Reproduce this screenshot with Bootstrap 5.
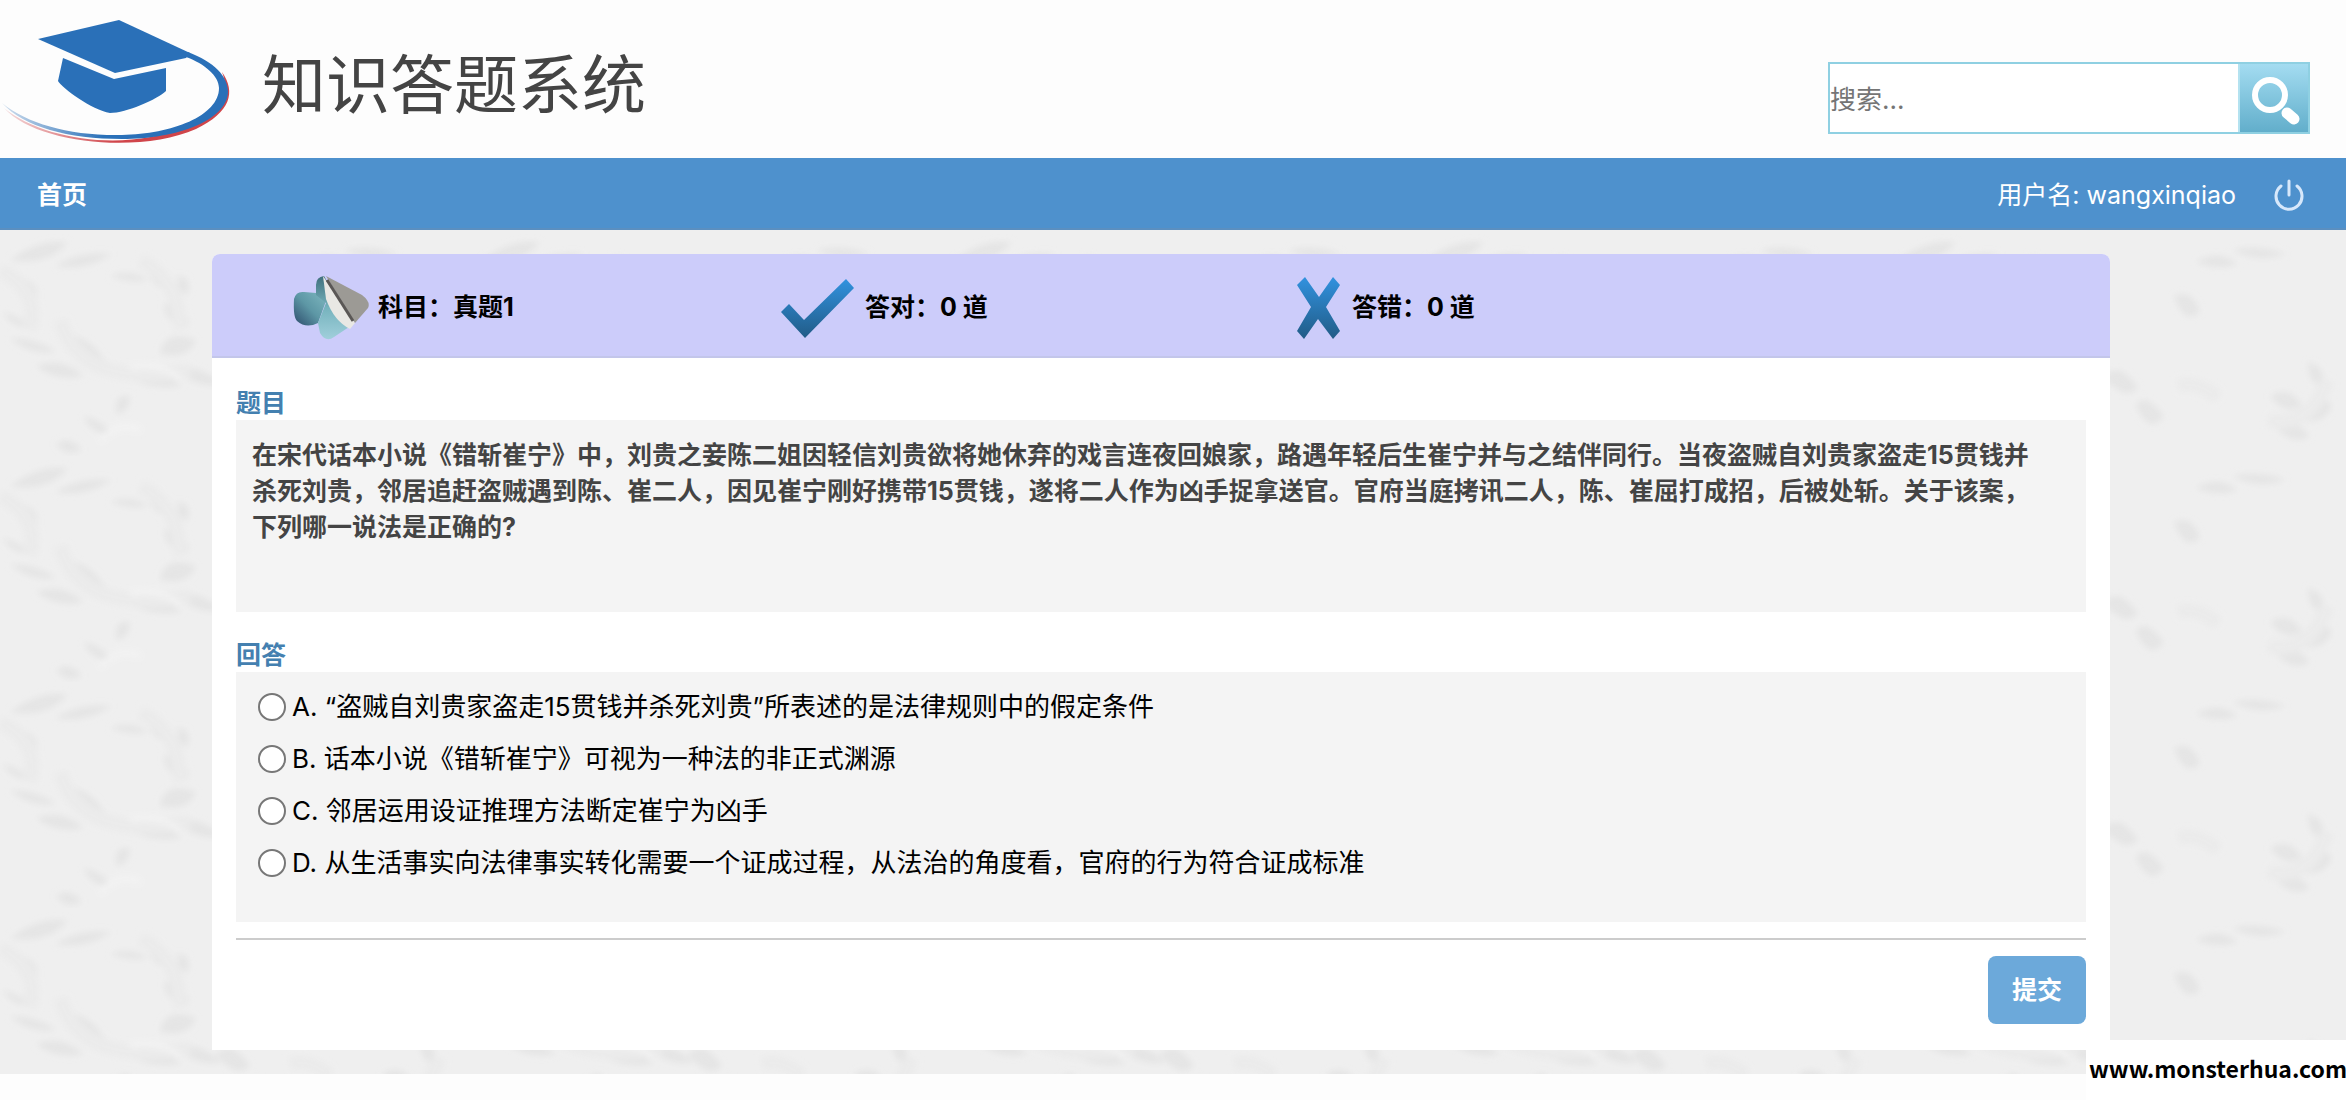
<!DOCTYPE html>
<html lang="zh-CN">
<head>
<meta charset="utf-8">
<meta name="viewport" content="width=device-width, initial-scale=1">
<title>知识答题系统</title>
<link rel="stylesheet" href="https://cdn.jsdelivr.net/npm/bootstrap@5.3.0/dist/css/bootstrap.min.css">
<style>
body{font-family:Inter,"Noto Sans CJK SC",sans-serif;font-size:26px;line-height:36px;color:#000;background:#fdfdfd}
.page{padding-bottom:26px}
.site-head{height:158px;padding-right:36px}
.site-logo{width:236px;height:158px}
.site-title{font-size:64px;line-height:80px;font-weight:400;color:#444;margin:0 0 0 26px;padding-top:12px}
.search-form{width:482px;height:72px;border:2px solid #8fd0e2;margin-top:38px}
.search-form input{min-width:0;padding:4px 0 0;border:0;font-size:26px;color:#333;border-radius:0;background:#fff}
.search-form input::placeholder{color:#757575;opacity:1}
.search-form button{width:70px;padding:0;border:0;border-left:2px solid #b4e2f0;background:linear-gradient(#a4dcf1,#7fc3dc 55%,#62aecb)}
.main-bar{height:72px;background:#4e91cd;border-bottom:2px solid #5b8fc0;padding:4px 36px 0 37px;font-size:25px}
.main-bar a,.main-bar span{color:#fff;text-decoration:none}
.stage{padding:24px 236px 24px 212px;background:#efefef}
.texture{position:absolute;inset:0;width:100%;height:100%}
.quiz{background:#fff;border-radius:8px 8px 0 0;overflow:hidden}
.score{height:104px;background:#ccccfa;border-bottom:2px solid #c3c6ea;padding:4px 0 0 80px}
.score-item{width:487px;font-size:25px;font-weight:700}
.score-icon{width:78px;height:72px;margin-right:8px}
.quiz-body{padding:28px 24px 26px}
.sec-title{font-size:25px;line-height:34px;font-weight:700;color:#4480b0;margin:0}
.panel{background:#f4f4f4}
.question{min-height:192px;padding:17px 14px 16px 16px;font-size:25px;font-weight:700;color:#444;margin-bottom:26px}
.answers{min-height:250px;padding:9px 22px}
.answers label{display:flex;align-items:center;height:52px}
.answers input{appearance:none;width:28px;height:28px;border:2px solid #777;border-radius:50%;background:#fff;margin:0 6px 0 0}
.answers input:checked{border:8px solid #4e91cd}
.rule{border:0;border-top:2px solid #ccc;opacity:1;margin:16px 0}
.send{width:98px;height:68px;padding:2px 0 0;font-size:25px;font-weight:700;color:#fff;background:#6ca9da;border:0;border-radius:8px}
.site-mark{right:0;bottom:0;width:260px;height:60px;padding-top:10px;padding-left:3px;background:#fff;font-family:"Noto Sans CJK SC",sans-serif;font-size:23px;font-weight:700;white-space:nowrap}
</style>
<script src="https://cdn.jsdelivr.net/npm/bootstrap@5.3.0/dist/js/bootstrap.bundle.min.js"></script>
</head>
<body>
<div class="page position-relative">
<header class="site-head d-flex align-items-center">
  <svg class="site-logo" viewBox="0 0 236 158" aria-hidden="true">
    <defs>
      <linearGradient id="swB" gradientUnits="userSpaceOnUse" x1="0" y1="0" x2="230" y2="0"><stop offset="0" stop-color="#2a70b8" stop-opacity=".2"/><stop offset=".45" stop-color="#2a70b8"/></linearGradient>
      <linearGradient id="swR" gradientUnits="userSpaceOnUse" x1="0" y1="0" x2="230" y2="0"><stop offset="0" stop-color="#d0454a" stop-opacity=".15"/><stop offset=".5" stop-color="#d0454a"/></linearGradient>
    </defs>
    <path d="M222 72C236 92 231 112 196 129 140 154 36 144 4 108 44 141 130 152 184 126 222 108 230 92 222 72Z" fill="url(#swR)"/>
    <path d="M188 52C214 62 228 76 228 92 227 120 178 139 122 139 68 139 24 127 2 103 28 124 70 136 122 135 172 134 219 116 219 88 219 76 205 64 186 57Z" fill="url(#swB)"/>
    <path d="M38 39 119 20 190 53 186 58 115 73Z" fill="#2a70b8"/>
    <path d="M63 58 114 79 166 68V91C158 99 126 113 110 113 92 110 62 88 58 81Z" fill="#2a70b8"/>
  </svg>
  <h1 class="site-title">知识答题系统</h1>
  <form class="search-form d-flex ms-auto" role="search">
    <input class="flex-grow-1" type="search" placeholder="搜索..." aria-label="搜索">
    <button type="button" aria-label="搜索"><svg width="66" height="66" viewBox="0 0 66 66"><circle cx="29" cy="30" r="15" fill="none" stroke="#fff" stroke-width="6"/><path d="m46 48 7 6" stroke="#fff" stroke-width="11" stroke-linecap="round"/></svg></button>
  </form>
</header>
<nav class="main-bar d-flex align-items-center">
  <a href="#" class="fw-bold">首页</a>
  <span class="ms-auto">用户名: wangxinqiao</span>
  <a href="#" class="d-flex ms-4 ps-2" aria-label="退出"><svg width="42" height="34" viewBox="0 0 42 34" fill="none" stroke="#d7e8fb" stroke-width="3" stroke-linecap="round"><path d="M13 8a13 13 0 1 0 16 0M21 3v14"/></svg></a>
</nav>
<main class="stage position-relative">
  <svg class="texture" aria-hidden="true">
    <defs>
      <filter id="soft"><feGaussianBlur stdDeviation="3"/></filter>
      <pattern id="leaves" width="472" height="226" patternUnits="userSpaceOnUse">
        <g filter="url(#soft)" fill="#e5e5e5">
          <path d="M10 30Q40 8 68 12 50 36 10 30ZM55 36Q80 20 112 24 85 42 55 36ZM2 82Q20 86 32 98 12 98 2 82ZM10 108Q36 108 56 122 30 126 10 108ZM36 136Q62 126 84 146 56 152 36 136ZM66 104Q98 108 112 146 74 138 66 104ZM120 140Q154 136 182 156 142 162 120 140ZM174 138Q200 134 222 154 196 160 174 138ZM160 124Q164 98 196 110 188 130 160 124ZM164 74Q182 72 190 94 166 98 164 74ZM178 46Q192 46 188 64 176 64 178 46ZM110 46Q130 38 148 50 130 54 110 46ZM148 40Q162 42 168 60 152 58 148 40ZM116 176Q116 164 130 166 130 182 116 184ZM84 186Q104 190 110 204 90 204 84 186ZM16 52Q34 44 38 66 20 70 16 52ZM56 214Q70 204 82 220 66 228 56 214ZM344 20Q372 14 398 24 370 34 344 20ZM308 32Q330 18 350 34 330 42 308 32ZM286 66Q304 58 312 82 296 96 286 66ZM382 166Q402 154 414 176 396 186 382 166ZM390 200Q404 186 422 206 406 216 390 200ZM410 190Q420 160 444 174 438 196 410 190ZM420 132Q440 138 434 156 420 154 420 132ZM216 146Q232 130 250 158 236 172 216 146ZM248 176Q256 160 276 186 262 206 248 176Z"/>
          <path d="M60 90Q80 160 190 140M140 30Q180 50 180 100M290 156Q310 150 330 168M0 40Q40 60 30 100M380 190Q420 200 440 150" fill="none" stroke="#ebebeb" stroke-width="14"/>
          <path d="M130 138Q158 132 180 148M100 210Q120 190 140 200" fill="none" stroke="#f5f5f5" stroke-width="4"/>
        </g>
      </pattern>
    </defs>
    <rect width="100%" height="100%" fill="url(#leaves)"/>
  </svg>
  <section class="quiz position-relative">
    <div class="score d-flex">
      <div class="score-item d-flex align-items-center">
        <svg class="score-icon" viewBox="0 0 78 72" aria-hidden="true">
          <defs>
            <linearGradient id="erA" x1="0" y1="1" x2="1" y2="0"><stop offset="0" stop-color="#2c4b6b"/><stop offset=".5" stop-color="#5d97a5"/><stop offset="1" stop-color="#7fb8c0"/></linearGradient>
            <linearGradient id="erB" x2="0" y2="1"><stop offset="0" stop-color="#3f6f7c"/><stop offset=".5" stop-color="#76b3bd"/><stop offset="1" stop-color="#a0cfdb"/></linearGradient>
          </defs>
          <path d="M2 28Q4 20 12 21L24 22 34 30 26 52Q14 58 5 50 1 46 2 28Z" fill="url(#erA)"/>
          <path d="M24 14Q24 6 32 5L60 54 42 66Q34 72 28 62L26 52 34 32 24 24Z" fill="url(#erB)"/>
          <path d="M31 5 34 28Q42 50 58 58L63 52Z" fill="#e9e8e4"/>
          <path d="M34 5 70 24Q79 31 76 37L63 52Z" fill="#9c9a95"/>
          <path d="m35 9 26 41" stroke="#5a5755" stroke-width="3"/>
        </svg>
        <span>科目：真题1</span>
      </div>
      <div class="score-item d-flex align-items-center">
        <svg class="score-icon" viewBox="0 0 78 72" aria-hidden="true"><defs><linearGradient id="ink" x2="0" y2="1"><stop offset="0" stop-color="#3192df"/><stop offset="1" stop-color="#215b86"/></linearGradient></defs><path d="M2 41 10 33 25 49 67 8 75 17 26 67Z" fill="url(#ink)"/></svg>
        <span>答对：0 道</span>
      </div>
      <div class="score-item d-flex align-items-center">
        <svg class="score-icon" viewBox="0 0 78 72" aria-hidden="true"><path d="M31 14 39 6 53 26 67 6 74 14 60 36 74 60 67 68 52 48 38 68 31 60 45 36Z" fill="url(#ink)"/></svg>
        <span>答错：0 道</span>
      </div>
    </div>
    <div class="quiz-body">
      <h2 class="sec-title">题目</h2>
      <div class="panel question">在宋代话本小说《错斩崔宁》中，刘贵之妾陈二姐因轻信刘贵欲将她休弃的戏言连夜回娘家，路遇年轻后生崔宁并与之结伴同行。当夜盗贼自刘贵家盗走15贯钱并<br>杀死刘贵，邻居追赶盗贼遇到陈、崔二人，因见崔宁刚好携带15贯钱，遂将二人作为凶手捉拿送官。官府当庭拷讯二人，陈、崔屈打成招，后被处斩。关于该案，<br>下列哪一说法是正确的?</div>
      <form>
        <h2 class="sec-title">回答</h2>
        <div class="panel answers">
          <label><input type="radio" name="answer" value="A"><span>A. “盗贼自刘贵家盗走15贯钱并杀死刘贵”所表述的是法律规则中的假定条件</span></label>
          <label><input type="radio" name="answer" value="B"><span>B. 话本小说《错斩崔宁》可视为一种法的非正式渊源</span></label>
          <label><input type="radio" name="answer" value="C"><span>C. 邻居运用设证推理方法断定崔宁为凶手</span></label>
          <label><input type="radio" name="answer" value="D"><span>D. 从生活事实向法律事实转化需要一个证成过程，从法治的角度看，官府的行为符合证成标准</span></label>
        </div>
        <hr class="rule">
        <div class="d-flex justify-content-end"><button class="btn send" type="button">提交</button></div>
      </form>
    </div>
  </section>
</main>
<div class="site-mark position-absolute">www.monsterhua.com</div>
</div>
</body>
</html>
